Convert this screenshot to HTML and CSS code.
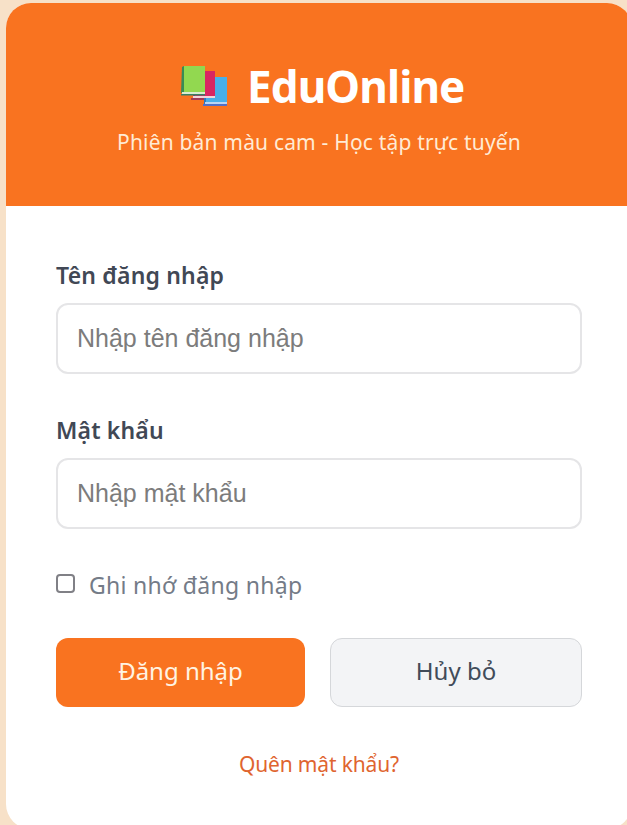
FILE: index.html
```
<!DOCTYPE html>
<html lang="vi">
<head>
<meta charset="utf-8">
<title>EduOnline</title>
<link rel="stylesheet" href="styles.css">
</head>
<body>
<main class="card">
  <header class="header">
    <h1 class="brand">
      <svg class="books" viewBox="0 0 48 44" aria-hidden="true">
        <path fill="#2f78bd" d="M23 13h22v27H23z"/>
        <path fill="#48afe9" d="M25 13h21v25H25z"/>
        <path fill="#b9d5f3" d="M24 38h22v2H24z"/>
        <path fill="#526fc5" d="M22 40h24v2H22z"/>
        <path fill="#a62358" d="M12 7h22v26H12z"/>
        <path fill="#d82662" d="M14 7h20v25H14z"/>
        <path fill="#f3d4db" d="M12 32h22v2H12z"/>
        <path fill="#a33a55" d="M10 34h13v2H10z"/>
        <path fill="#398b55" d="M1 3l2-1v27H0z"/>
        <path fill="#92d850" d="M3 2h21v26H3z"/>
        <path fill="#d9edcf" d="M1 28h23v2H1z"/>
        <path fill="#397f65" d="M0 30h24v1.500H0z"/>
      </svg>
      <span class="brand-name">EduOnline</span>
    </h1>
    <p class="tagline">Phiên bản màu cam - Học tập trực tuyến</p>
  </header>
  <form class="form">
    <label class="label" for="user">Tên đăng nhập</label>
    <input class="input" id="user" type="text" placeholder="Nhập tên đăng nhập">
    <label class="label" for="pass">Mật khẩu</label>
    <input class="input" id="pass" type="password" placeholder="Nhập mật khẩu">
    <label class="remember"><input class="check" type="checkbox"><span>Ghi nhớ đăng nhập</span></label>
    <div class="actions">
      <button class="button primary" type="button"><span>Đăng nhập</span></button>
      <button class="button secondary" type="button"><span>Hủy bỏ</span></button>
    </div>
    <a class="forgot" href="#"><span>Quên mật khẩu?</span></a>
  </form>
</main>
</body>
</html>
```
FILE: styles.css
```
* { box-sizing: border-box; }
html { overflow: hidden; }
body {
  margin: 0;
  padding: 3px 0 0 6px;
  height: 825px;
  overflow: hidden;
  background: #f7e1c8;
  font-family: "Noto Sans", "Open Sans", sans-serif;
}
.card {
  width: 626px;
  height: 826px;
  border-radius: 25px;
  overflow: hidden;
  background: #fff;
}
.header {
  height: 203px;
  padding-top: 51px;
  background: #f97320;
  color: #fff;
}
.brand {
  display: flex;
  align-items: center;
  margin: 0;
  padding-left: 175px;
  height: 64px;
  gap: 18px;
  font-size: 44px;
  letter-spacing: -.9px;
  line-height: 64px;
}
.books { width: 48px; height: 44px; }
.tagline {
  margin: 9px 0 0;
  text-align: center;
  font-size: 21px;
  letter-spacing: .18px;
  line-height: 30px;
  color: #ffebd5;
}
.form {
  display: flex;
  flex-direction: column;
  width: 526px;
  margin-left: 50px;
  padding-top: 52px;
}
.label {
  height: 45px;
  line-height: 34px;
  font-size: 23px;
  font-weight: 600;
  letter-spacing: .17px;
  color: #414855;
}
.input {
  height: 71px;
  margin: 0 0 39px;
  padding: 0 19px 1px;
  border: 2px solid #e5e5e7;
  border-radius: 12px;
  background: #fff;
  font: 25px "Liberation Sans", sans-serif;
}
.input::placeholder { color: #7c7c7c; }
.remember {
  display: flex;
  align-items: center;
  height: 34px;
  margin-top: 1px;
  gap: 14px;
  font-size: 23px;
  letter-spacing: .3px;
  color: #747b87;
}
.remember span { margin-bottom: 2px; }
.check {
  appearance: none;
  width: 19px;
  height: 19px;
  margin: 0 0 6px;
  border: 2px solid #808086;
  border-radius: 4px;
}
.actions {
  display: grid;
  grid-template-columns: 249px 252px;
  gap: 25px;
  margin-top: 35px;
}
.button {
  height: 69px;
  padding: 0 0 4px;
  border: 0;
  border-radius: 12px;
  font: 24px "Noto Sans", sans-serif;
}
.primary { background: #f97320; color: #fff3e3; }
.secondary { background: #f3f4f6; color: #414b59; border: 1px solid #d5d7da; }
.forgot {
  margin-top: 42px;
  text-align: center;
  font-size: 21px;
  letter-spacing: -.15px;
  line-height: 30px;
  color: #df6530;
  text-decoration: none;
}
```
